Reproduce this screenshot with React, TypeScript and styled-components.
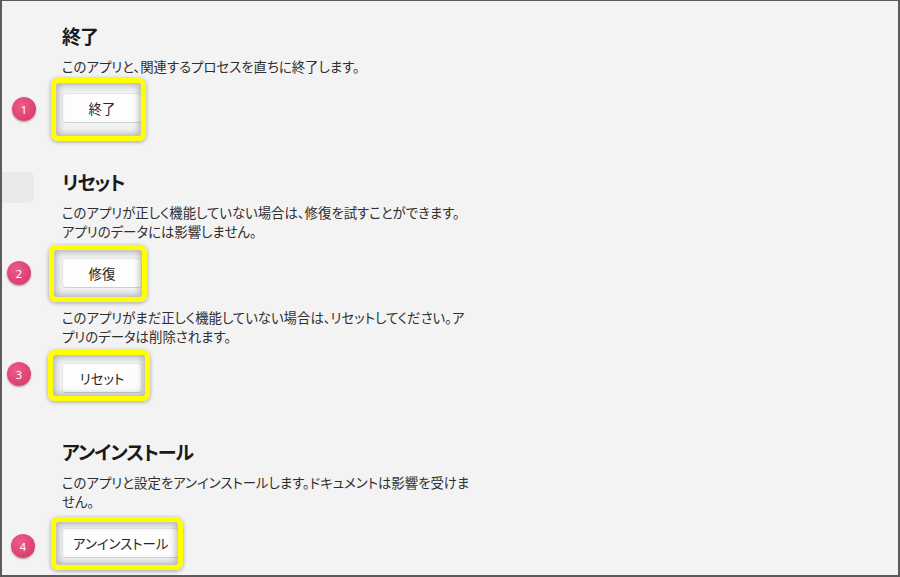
import React from "react";
import styled, { createGlobalStyle } from "styled-components";

const GlobalStyle = createGlobalStyle`
  html, body {
    margin: 0;
    padding: 0;
    background: #ffffff;
  }
  body {
    font-family: "Noto Sans CJK JP", "Noto Sans", sans-serif;
    font-feature-settings: "palt";
  }
`;

const Window = styled.div`
  box-sizing: border-box;
  width: 900px;
  height: 577px;
  display: flex;
  background: #f3f3f3;
  border: 2px solid #5b5b5b;
  border-top-width: 1px;
  overflow: hidden;
`;

const Sidebar = styled.div`
  width: 32px;
  flex-shrink: 0;
  padding-top: 171px;
`;

const NavItem = styled.div`
  width: 32px;
  height: 31px;
  background: #eaeaea;
  border-radius: 0 5px 5px 0;
`;

const Content = styled.div`
  display: flex;
  flex-direction: column;
  gap: 45px;
  padding: 21px 0 0 28px;
`;

const Section = styled.section`
  display: flex;
  flex-direction: column;
`;

const Heading = styled.h2`
  margin: 0;
  font-size: 19px;
  line-height: 28px;
  font-weight: 700;
  color: #1a1a1a;
  letter-spacing: -1px;
`;

const Description = styled.p<{ $first?: boolean }>`
  margin: ${p => (p.$first ? "7px" : "20px")} 0 0;
  font-size: 13.4px;
  line-height: 19px;
  color: #2e2e2e;
  white-space: nowrap;
`;

const ActionRow = styled.div`
  position: relative;
  align-self: flex-start;
  margin-top: 17px;
`;

const Button = styled.button`
  display: block;
  box-sizing: border-box;
  height: 30px;
  min-width: 80px;
  padding: 0 10px;
  font-family: inherit;
  font-feature-settings: "palt";
  font-size: 13.4px;
  color: #262626;
  background: #fdfdfd;
  border: 1px solid #e6e6e6;
  border-bottom-color: #d0d0d0;
  border-radius: 4px;
`;

const Highlight = styled.div<{ $x: number; $y: number; $w: number; $h: number }>`
  position: absolute;
  left: ${p => p.$x}px;
  top: ${p => p.$y}px;
  width: ${p => p.$w}px;
  height: ${p => p.$h}px;
  box-sizing: border-box;
  border: 5px solid #ffff00;
  border-radius: 7px;
  box-shadow: inset 0 0 7px 2px rgba(0, 0, 0, 0.28), 0 1px 4px rgba(0, 0, 0, 0.35);
  pointer-events: none;
`;

const Badge = styled.span<{ $x: number; $y: number }>`
  position: absolute;
  left: ${p => p.$x}px;
  top: ${p => p.$y}px;
  width: 24px;
  height: 24px;
  border-radius: 50%;
  display: flex;
  align-items: center;
  justify-content: center;
  background: radial-gradient(circle at 40% 35%, #ec5b88 0%, #dc3f71 70%);
  box-shadow: 0 1px 2px rgba(0, 0, 0, 0.35);
  color: #ffffff;
  font-family: "Noto Sans", sans-serif;
  font-size: 11px;
  line-height: 1;
`;

type Box = { x: number; y: number; w: number; h: number };

interface ActionProps {
  label: string;
  index: number;
  frame: Box;
  badge: { x: number; y: number };
}

const Action: React.FC<ActionProps> = ({ label, index, frame, badge }) => (
  <ActionRow>
    <Button>{label}</Button>
    <Highlight $x={frame.x} $y={frame.y} $w={frame.w} $h={frame.h} />
    <Badge $x={badge.x} $y={badge.y}>{index}</Badge>
  </ActionRow>
);

// lines are broken where the original window wraps them
const Lines: React.FC<{ lines: string[] }> = ({ lines }) => (
  <>
    {lines.map((l, i) => (
      <React.Fragment key={i}>
        {i > 0 && <br />}
        {l}
      </React.Fragment>
    ))}
  </>
);

export default function App() {
  return (
    <>
      <GlobalStyle />
      <Window>
        <Sidebar>
          <NavItem />
        </Sidebar>
        <Content>
          <Section>
            <Heading>終了</Heading>
            <Description $first>このアプリと、関連するプロセスを直ちに終了します。</Description>
            <Action
              label="終了"
              index={1}
              frame={{ x: -11, y: -15, w: 95, h: 63 }}
              badge={{ x: -50, y: 4 }}
            />
          </Section>

          <Section>
            <Heading>リセット</Heading>
            <Description $first>
              <Lines
                lines={[
                  "このアプリが正しく機能していない場合は、修復を試すことができます。",
                  "アプリのデータには影響しません。",
                ]}
              />
            </Description>
            <Action
              label="修復"
              index={2}
              frame={{ x: -13, y: -13, w: 98, h: 57 }}
              badge={{ x: -55, y: 3 }}
            />
            <Description>
              <Lines
                lines={[
                  "このアプリがまだ正しく機能していない場合は、リセットしてください。ア",
                  "プリのデータは削除されます。",
                ]}
              />
            </Description>
            <Action
              label="リセット"
              index={3}
              frame={{ x: -14, y: -13, w: 102, h: 51 }}
              badge={{ x: -55, y: -1 }}
            />
          </Section>

          <Section>
            <Heading>アンインストール</Heading>
            <Description $first>
              <Lines
                lines={[
                  "このアプリと設定をアンインストールします。ドキュメントは影響を受けま",
                  "せん。",
                ]}
              />
            </Description>
            <Action
              label="アンインストール"
              index={4}
              frame={{ x: -11, y: -11, w: 132, h: 53 }}
              badge={{ x: -51, y: 6 }}
            />
          </Section>
        </Content>
      </Window>
    </>
  );
}
